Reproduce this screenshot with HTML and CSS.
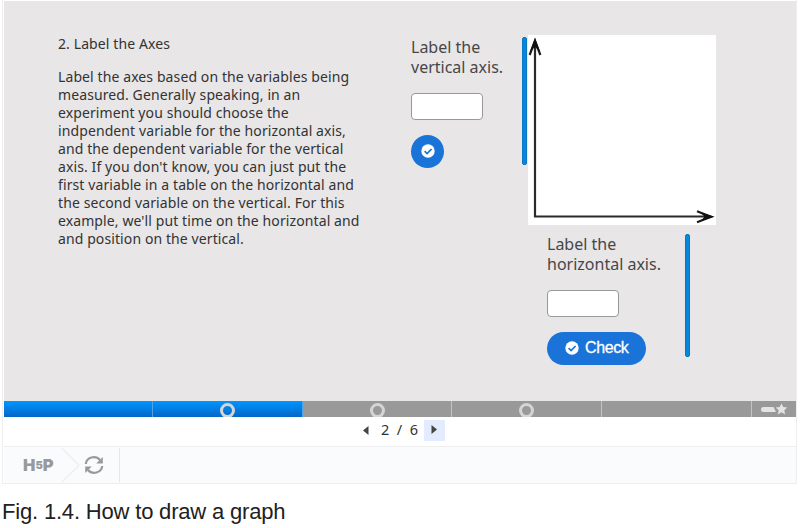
FILE: index.html
```
<!DOCTYPE html>
<html lang="en">

<head>
    <meta charset="utf-8">
    <title>How to draw a graph</title>
    <link rel="stylesheet" href="styles.css">
</head>

<body>
    <div class="presentation">
        <div class="slide">
            <div class="intro">
                <p>2. Label the Axes</p>
                <p>Label the axes based on the variables being<br>
                    measured. Generally speaking, in an<br>
                    experiment you should choose the<br>
                    indpendent variable for the horizontal axis,<br>
                    and the dependent variable for the vertical<br>
                    axis. If you don't know, you can just put the<br>
                    first variable in a table on the horizontal and<br>
                    the second variable on the vertical. For this<br>
                    example, we'll put time on the horizontal and<br>
                    and position on the vertical.</p>
            </div>
            <div class="question vertical">
                <div class="label">Label the<br>vertical axis.</div>
                <input type="text" class="answer">
                <button class="check round">
                    <svg width="14" height="14" viewBox="0 0 14 14">
                        <circle cx="7" cy="7" r="6.7" fill="#fff" />
                        <path d="M3.6 7.1l2.5 2.4 4.5-4.5" fill="none" stroke="#1a73d9" stroke-width="1.7" />
                    </svg>
                </button>
            </div>
            <div class="scroll scroll-left"></div>
            <div class="graph-col">
                <svg class="graph" width="188" height="190" viewBox="0 0 188 190">
                    <rect width="188" height="190" fill="#fff" />
                    <path d="M7 8V181.5H182" fill="none" stroke="#2b2b2b" stroke-width="2.200" />
                    <path d="M1.6 20L7 6l5.400 14M169 176.300l14 5.400-14 5.600" fill="none" stroke="#1c1c1c" stroke-width="2.200" />
                    <path d="M7 2.500l5 14L7 12l-5 4.500zM186.500 181.700l-14-4.500 4 4.500-4 4.500z" fill="#111" />
                </svg>
                <div class="bottom-row">
                    <div class="question horizontal">
                        <div class="label">Label the<br>horizontal axis.</div>
                        <input type="text" class="answer">
                        <button class="check">
                            <svg width="14" height="14" viewBox="0 0 14 14">
                                <circle cx="7" cy="7" r="6.7" fill="#fff" />
                                <path d="M3.6 7.1l2.5 2.4 4.5-4.5" fill="none" stroke="#1a73d9" stroke-width="1.7" />
                            </svg>
                            <span>Check</span>
                        </button>
                    </div>
                    <div class="scroll scroll-right"></div>
                </div>
            </div>
        </div>

        <div class="progress">
            <div class="part done"></div>
            <div class="part done"><span class="dot"></span></div>
            <div class="part"><span class="dot"></span></div>
            <div class="part"><span class="dot"></span></div>
            <div class="part"></div>
            <div class="part last">
                <svg width="28" height="14" viewBox="0 0 28 14">
                    <path d="M3.500 5h10l2.500 5H3.500a2.500 2.500 0 0 1 0-5z" fill="#e4e4e4" />
                    <path d="M21.500 1.500l1.800 3.500 3.900.400-2.900 2.800.900 4.200-3.700-2.200-3.700 2.200.900-4.200-2.900-2.800 3.900-.4z" fill="#e4e4e4" />
                </svg>
            </div>
        </div>

        <div class="nav">
            <div class="prev"><svg width="6" height="9" viewBox="0 0 6 9"><path d="M5.500 0v9L0 4.500z" fill="#444" /></svg></div>
            <div class="pages"><span>2</span><span>/</span><span>6</span></div>
            <div class="next"><svg width="6" height="9" viewBox="0 0 6 9"><path d="M.5 0v9L6 4.500z" fill="#444" /></svg></div>
        </div>

        <div class="actions">
            <div class="logo"><b>H</b><i>5</i><b>P</b></div>
            <svg class="arrow" width="20" height="36" viewBox="0 0 20 36">
                <path d="M1 1l17 17.500L1 35" fill="none" stroke="#eee" stroke-width="1.300" />
            </svg>
            <svg class="reload" width="20" height="18" viewBox="0 0 20 18">
                <path d="M1.800 8A8 7.500 0 0 1 16 4M18.200 10A8 7.500 0 0 1 4 14" fill="none" stroke="#999" stroke-width="2.200" />
                <path d="M18.800 1v6.400h-6.600zM1.200 17v-6.400h6.600z" fill="#999" />
            </svg>
        </div>
    </div>
    <p class="caption">Fig. 1.4. How to draw a graph</p>
</body>

</html>
```
FILE: styles.css
```
* {
    box-sizing: border-box;
    margin: 0;
    padding: 0;
}

body {
    background: #fff;
    height: 528px;
    overflow: hidden;
    font-family: "Noto Sans", sans-serif;
}

.presentation {
    width: 795px;
    height: 484px;
    margin-left: 2px;
    border: 1px solid #eee;
    border-top: 0;
    padding: 1px 0 0 1px;
}

.slide {
    display: flex;
    height: 400px;
    width: 792px;
    background: #e8e6e7;
}

.intro {
    width: 353px;
    padding: 34px 0 0 54px;
    margin-right: 54px;
    font-size: 14px;
    line-height: 18px;
    letter-spacing: 0.1px;
    color: #333;
    white-space: nowrap;
}

.intro p + p {
    margin-top: 15px;
}

.question {
    display: flex;
    flex-direction: column;
    align-items: flex-start;
}

.vertical {
    width: 111px;
    padding-top: 36px;
}

.label {
    font-size: 16px;
    line-height: 20px;
    color: #474747;
    white-space: nowrap;
}

.answer {
    width: 72px;
    height: 27px;
    margin: 16px 0 15px;
    border: 1px solid #999;
    border-radius: 4px;
    background: #fff;
}

.check {
    display: flex;
    align-items: center;
    gap: 6px;
    width: 99px;
    height: 33px;
    padding: 0 0 1px 18px;
    border: 0;
    border-radius: 17px;
    background: #1a73d9;
    color: #fff;
    font: 16px "Liberation Sans", Arial, sans-serif;
    letter-spacing: -0.4px;
    -webkit-text-stroke: 0.3px #fff;
}

.round {
    width: 33px;
    padding-left: 9.5px;
}

.scroll {
    width: 5px;
    border-radius: 2px;
    background: #0a84dc;
    border: 1px solid #0a77c2;
}

.scroll-left {
    height: 128px;
    margin: 36px 1px 0 0;
}

.graph-col {
    width: 188px;
    padding-top: 34px;
}

.graph {
    display: block;
}

.bottom-row {
    display: flex;
    padding: 9px 0 0 19px;
}

.horizontal {
    width: 138px;
}

.scroll-right {
    height: 123px;
}

.progress {
    display: flex;
    width: 792px;
    height: 16px;
    overflow: hidden;
}

.part {
    display: flex;
    justify-content: center;
    width: 149.55px;
    height: 16px;
    background: #999;
    border-right: 1px solid #c4c4c4;
}

.part:first-child {
    width: 149.4px;
}

.done {
    background: linear-gradient(#0096ff, #0366c8);
    border-right-color: #4fa4e8;
}

.last {
    flex: 1;
    border: 0;
    padding: 1px 0 0 1px;
}

.dot {
    width: 15px;
    height: 15px;
    margin-top: 2px;
    border: 3px solid #d5d5d5;
    border-radius: 50%;
}

.nav {
    display: flex;
    align-items: center;
    height: 29px;
    padding: 0 0 3px 359px;
    color: #333;
    font-size: 14.5px;
}

.prev {
    width: 18px;
    line-height: 0;
}

.pages {
    display: flex;
    justify-content: space-between;
    width: 37px;
    margin-top: -2px;
}

.next {
    display: flex;
    align-items: center;
    justify-content: center;
    width: 21px;
    height: 21px;
    margin-left: 6px;
    padding: 0 2px 1px 0;
    background: #e3ecff;
}

.actions {
    display: flex;
    align-items: center;
    width: 792px;
    height: 37px;
    border-top: 1px solid #eee;
    background: #fafbfd;
}

.logo {
    display: flex;
    align-items: center;
    width: 38px;
    margin-left: 19px;
    color: #999;
    font: 900 16.5px "Inter", sans-serif;
}

.logo i {
    font-size: 11px;
    font-style: normal;
}

.logo b {
    font-weight: 900;
}

.arrow {
    margin-right: 3px;
}

.reload {
    margin-right: 15px;
}

.actions::after {
    content: "";
    width: 1px;
    height: 34px;
    background: #e8e8e8;
}

.caption {
    margin: 15px 0 0 2px;
    font: 22px/26px "Liberation Sans", Arial, sans-serif;
    letter-spacing: -0.18px;
    color: #212121;
}
```
